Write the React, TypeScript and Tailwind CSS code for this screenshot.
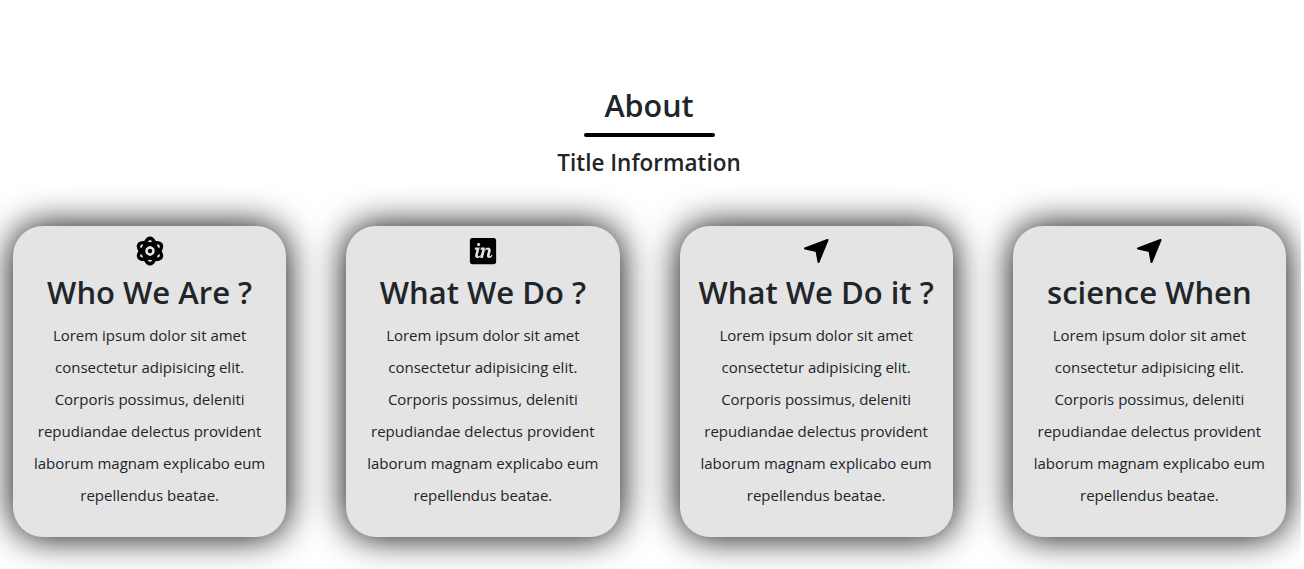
import { FaInvision } from "react-icons/fa"

const lines = [
  "Lorem ipsum dolor sit amet",
  "consectetur adipisicing elit.",
  "Corporis possimus, deleniti",
  "repudiandae delectus provident",
  "laborum magnam explicabo eum",
  "repellendus beatae.",
]

function Atom() {
  return (
    <svg width="30" height="30" viewBox="0 0 30 30" fill="none" stroke="#000" strokeWidth="3.4">
      <ellipse cx="15" cy="15" rx="12.8" ry="6.2" transform="rotate(90 15 15)" />
      <ellipse cx="15" cy="15" rx="12.8" ry="6.2" transform="rotate(30 15 15)" />
      <ellipse cx="15" cy="15" rx="12.8" ry="6.2" transform="rotate(150 15 15)" />
      <circle cx="15" cy="15" r="4.4" fill="#e4e4e4" stroke="none" />
      <circle cx="15" cy="15" r="2.2" fill="#000" stroke="none" />
    </svg>
  )
}

function Arrow() {
  return (
    <svg width="30" height="30" viewBox="0 0 30 30" fill="#000" stroke="#000" strokeWidth="2" strokeLinejoin="round">
      <path d="M26.5 4 4 12.5 15.5 15 17.5 26Z" />
    </svg>
  )
}

const cards = [
  { title: "Who We Are ?", icon: <Atom /> },
  { title: "What We Do ?", icon: <FaInvision className="h-[30px] w-[30px] text-black" /> },
  { title: "What We Do it ?", icon: <Arrow /> },
  { title: "science When", icon: <Arrow /> },
]

export default function App() {
  return (
    <div className="h-[569px] w-[1301px] overflow-hidden bg-white font-['Open_Sans',sans-serif] text-[#212529]">
      <div className="flex flex-col items-center pt-[85px] pr-[3px]">
        <h2 className="text-[30.5px] leading-[40px] font-semibold">About</h2>
        <div className="mt-[8px] h-1 w-[131px] rounded-full bg-black" />
        <h4 className="mt-[8px] text-[22.5px] leading-[36px] font-semibold">Title Information</h4>
      </div>
      <div className="mt-[45px] grid grid-cols-4 gap-[60px] pr-[15px] pl-[13px]">
        {cards.map((c) => (
          <div
            key={c.title}
            className="flex h-[311px] flex-col items-center rounded-[30px] bg-[#e4e4e4] px-[15px] pt-[10px] text-center shadow-[0_0_36px_#000000]"
          >
            {c.icon}
            <h2 className="mt-[2px] text-[31px] leading-[48px] font-semibold whitespace-nowrap">{c.title}</h2>
            <p className="mt-[3px] text-[15px] leading-[32px]">
              {lines.map((l) => (
                <span key={l} className="block whitespace-nowrap">
                  {l}
                </span>
              ))}
            </p>
          </div>
        ))}
      </div>
    </div>
  )
}
